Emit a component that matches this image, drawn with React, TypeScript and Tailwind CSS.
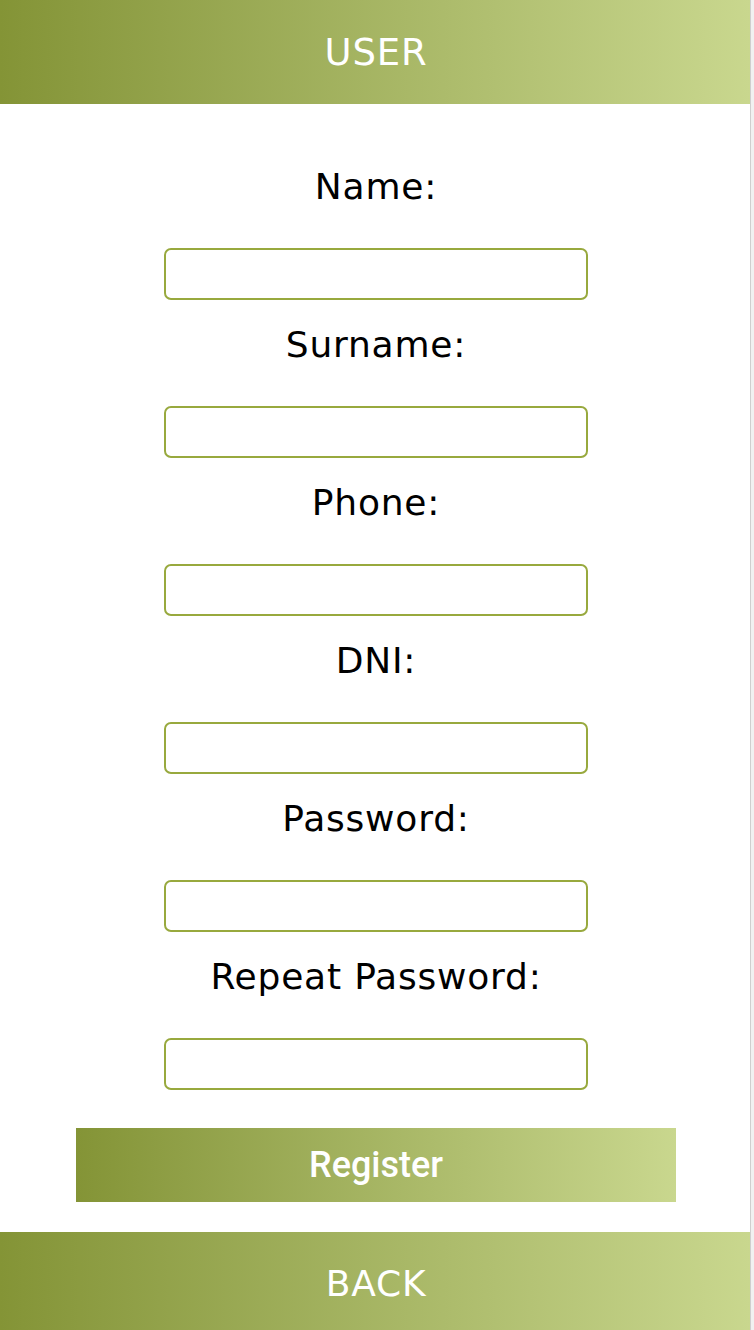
const fields = ['Name:', 'Surname:', 'Phone:', 'DNI:', 'Password:', 'Repeat Password:'];

export default function App() {
  return (
    <div className="flex min-h-[1330px] w-[754px] bg-white">
      <div className="flex w-[750px] flex-col" style={{ fontFamily: '"DejaVu Sans", sans-serif' }}>
        {/* Header */}
        <header className="flex h-[104px] items-center justify-center bg-gradient-to-r from-[#849436] to-[#c9d78e]">
          <h1 className="pl-[2px] text-[37px] font-normal leading-none tracking-[0.8px] text-white">USER</h1>
        </header>

        {/* Form */}
        <form className="flex flex-col items-center pl-[2px] pt-[38px]">
          {fields.map((label) => (
            <div key={label} className="flex w-full flex-col items-center pt-[23px]">
              <label className="mb-[39px] h-[44px] text-[36px] leading-[44px] tracking-[0.8px] text-black">{label}</label>
              <input
                type={label.includes('Password') ? 'password' : 'text'}
                className="h-[52px] w-[424px] rounded-[7px] border-2 border-[#98a93e] bg-white px-3 outline-none"
              />
            </div>
          ))}

          <button
            type="button"
            className="mt-[38px] flex h-[74px] w-[600px] items-center justify-center bg-gradient-to-r from-[#849436] to-[#c9d78e] text-[36px] font-medium text-white"
            style={{ fontFamily: 'Roboto, sans-serif' }}
          >
            Register
          </button>
        </form>

        {/* Footer */}
        <footer className="mt-[30px] flex h-[98px] items-center justify-center bg-gradient-to-r from-[#849436] to-[#c9d78e] pt-[6px]">
          <span className="pl-[2px] text-[36px] leading-none tracking-[0.8px] text-white">BACK</span>
        </footer>
      </div>

      {/* Scrollbar track */}
      <div className="w-[4px] border-l border-[#cfcfcf] bg-[#f1f1f1]" />
    </div>
  );
}
